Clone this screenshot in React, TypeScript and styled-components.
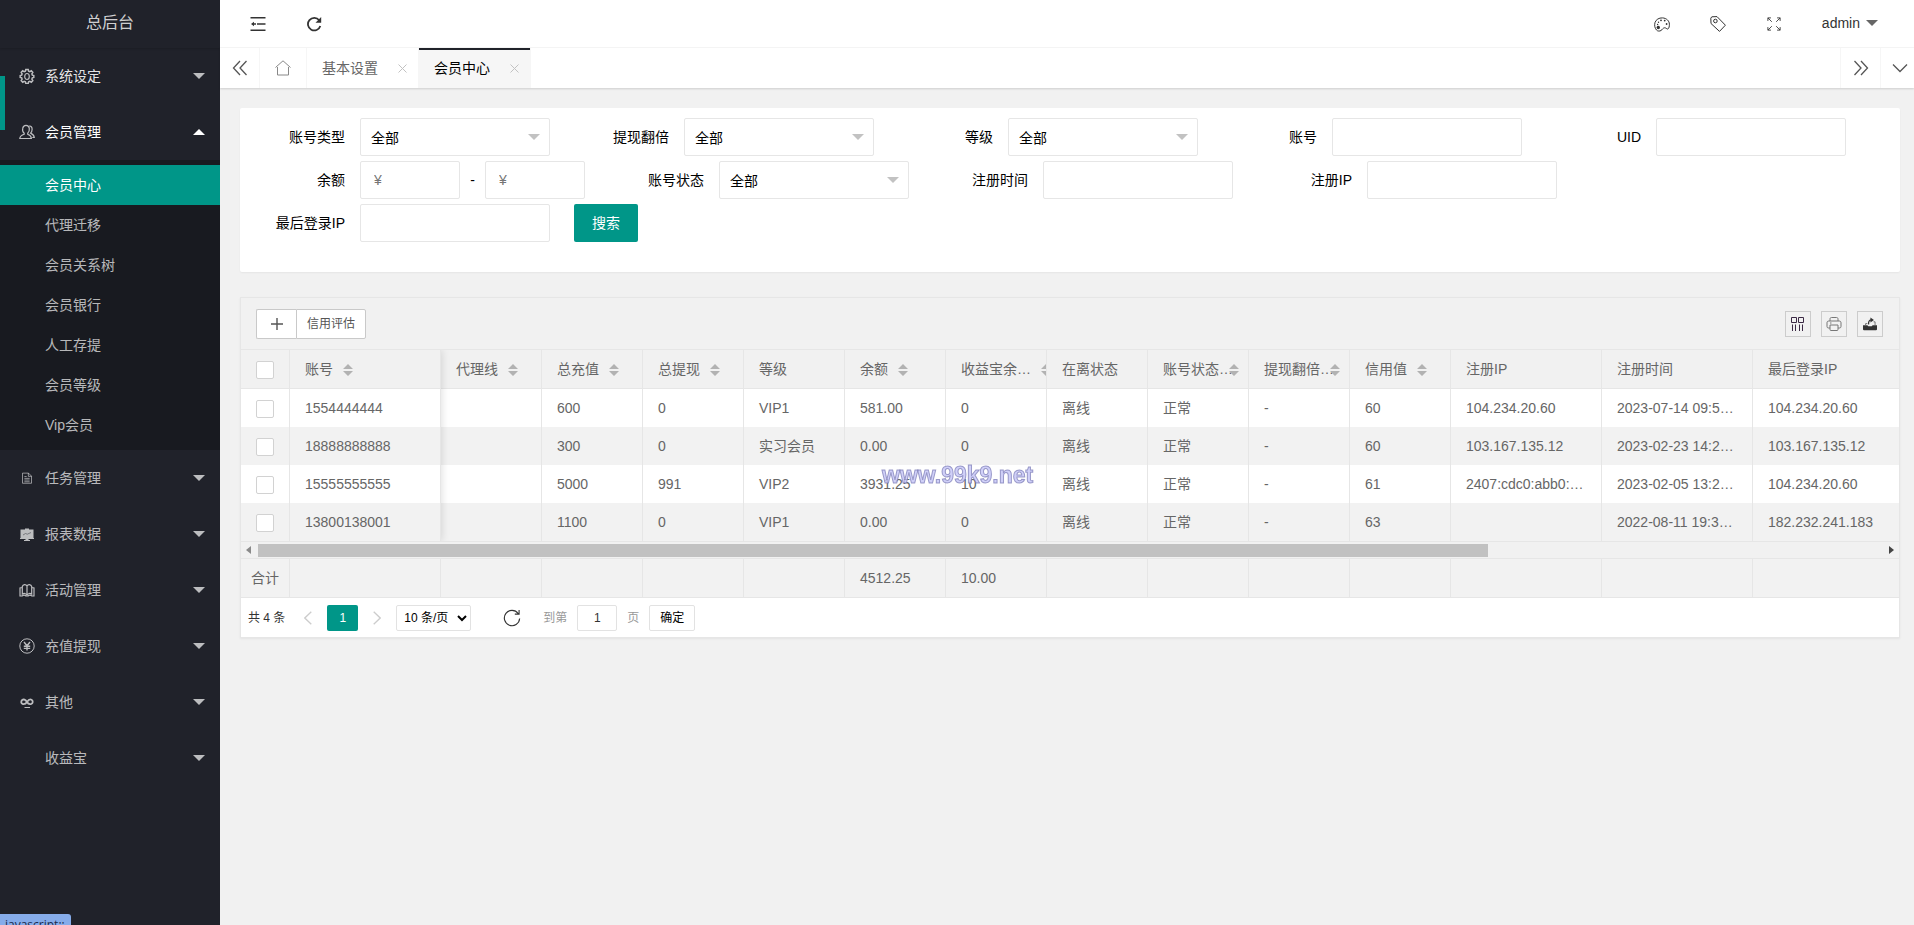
import React from "react";
import styled, { createGlobalStyle, css } from "styled-components";

const GlobalStyle = createGlobalStyle`
  *, *::before, *::after { box-sizing: border-box; }
  body {
    margin: 0;
    background: #f1f1f1;
    color: #333;
    font: 14px/24px "Liberation Sans", "Noto Sans CJK SC", sans-serif;
    overflow: hidden;
  }
  button, input, select { font: inherit; color: inherit; margin: 0; }
  a { color: inherit; text-decoration: none; }
  svg { display: block; flex: none; }
`;

const TEAL = "#009688";
const LINE = "#e6e6e6";

/* ---------- shell ---------- */

const Shell = styled.div`
  display: flex;
  height: 100vh;
  overflow: hidden;
`;

const Main = styled.div`
  flex: 1;
  min-width: 0;
  display: flex;
  flex-direction: column;
`;

/* ---------- sidebar ---------- */

const Sidebar = styled.aside`
  position: relative;
  flex: none;
  width: 220px;
  background: #20222a;
  overflow: hidden;
`;

const Brand = styled.h1`
  margin: 0;
  height: 48px;
  padding-bottom: 2px;
  display: flex;
  align-items: center;
  justify-content: center;
  font-size: 16px;
  font-weight: 400;
  color: rgba(255, 255, 255, 0.8);
  box-shadow: 0 1px 2px rgba(0, 0, 0, 0.15);
`;

const MenuLink = styled.a<{ $bright?: number }>`
  display: flex;
  align-items: center;
  height: 56px;
  padding: 0 15px 0 18px;
  color: ${(p) => (p.$bright === 2 ? "#fff" : p.$bright === 1 ? "rgba(255,255,255,.9)" : "rgba(255,255,255,.7)")};
`;

const MenuIcon = styled.span`
  width: 18px;
  height: 18px;
  margin-right: 9px;
  display: flex;
  align-items: center;
  justify-content: center;
  color: rgba(255, 255, 255, 0.7);
`;

const MenuText = styled.span`
  flex: 1;
`;

const SubMenu = styled.div`
  padding: 5px 0;
  background: #181a20;
`;

const SubLink = styled.a<{ $active?: boolean }>`
  display: flex;
  align-items: center;
  height: 40px;
  padding-left: 45px;
  color: ${(p) => (p.$active ? "#fff" : "rgba(255,255,255,.7)")};
  background: ${(p) => (p.$active ? TEAL : "transparent")};
`;

const HoverBar = styled.span`
  position: absolute;
  left: 0;
  top: 76px;
  width: 5px;
  height: 54px;
  background: ${TEAL};
`;

const StatusBubble = styled.div`
  position: fixed;
  left: 0;
  bottom: -11px;
  width: 71px;
  height: 22px;
  padding-left: 5px;
  font: 12px/22px "Open Sans", sans-serif;
  color: #1b2b4c;
  background: #86acea;
  border-top-right-radius: 3px;
`;

/* ---------- header ---------- */

const Header = styled.header`
  flex: none;
  height: 48px;
  padding: 0 36px 0 10px;
  display: flex;
  align-items: center;
  justify-content: space-between;
  background: #fff;
  border-bottom: 1px solid #f6f6f6;
`;

const HeaderGroup = styled.div`
  display: flex;
  align-items: center;
`;

const HeaderButton = styled.button`
  width: 56px;
  height: 46px;
  padding: 1px 0 0;
  border: 0;
  background: none;
  display: flex;
  align-items: center;
  justify-content: center;
`;

const UserButton = styled.button`
  height: 46px;
  margin-left: 20px;
  padding: 0 0 1px;
  border: 0;
  background: none;
  display: flex;
  align-items: center;
  gap: 6px;
`;

const TabBar = styled.nav`
  position: relative;
  flex: none;
  display: flex;
  height: 40px;
  background: #fff;
  box-shadow: 0 1px 2px rgba(0, 0, 0, 0.15);
`;

const TabControl = styled.button<{ $side?: "left" | "right" | "end" }>`
  width: ${(p) => (p.$side === "end" ? 34 : 40)}px;
  padding: 0 0 0 ${(p) => (p.$side === "end" ? 5 : 0)}px;
  border: 0 solid #f6f6f6;
  border-right-width: ${(p) => (p.$side === "left" ? 1 : 0)}px;
  border-left-width: ${(p) => (p.$side === "left" ? 0 : 1)}px;
  background: none;
  color: #555;
  display: flex;
  align-items: center;
  justify-content: center;
`;

const TabList = styled.div`
  flex: 1;
  display: flex;
`;

const Tab = styled.a<{ $active?: boolean }>`
  display: flex;
  align-items: center;
  padding: 0 11px 0 15px;
  border-right: 1px solid #f6f6f6;
  color: #666;
  gap: 20px;
  ${(p) =>
    p.$active &&
    css`
      color: #000;
      background: #f6f6f6;
      box-shadow: inset 0 2px 0 #20222a;
    `}
`;

const HomeTab = styled.a`
  width: 47px;
  display: flex;
  align-items: center;
  justify-content: center;
  border-right: 1px solid #f6f6f6;
  color: #888;
`;

/* ---------- search card ---------- */

const Content = styled.main`
  flex: 1;
  padding: 20px 14px 20px 20px;
`;

const SearchCard = styled.form`
  display: flex;
  flex-wrap: wrap;
  padding: 10px 10px 25px;
  background: #fff;
  border-radius: 2px;
  box-shadow: 0 1px 2px rgba(0, 0, 0, 0.05);
`;

const Field = styled.div`
  display: flex;
  align-items: center;
  margin: 0 24px 5px 0;
  color: #000;
`;

const Label = styled.label`
  width: 110px;
  padding-right: 15px;
  text-align: right;
`;

const TextInput = styled.input<{ $small?: boolean }>`
  width: ${(p) => (p.$small ? 100 : 190)}px;
  height: 38px;
  padding: 0 ${(p) => (p.$small ? 13 : 10)}px;
  border: 1px solid ${LINE};
  border-radius: 2px;
  background: #fff;
  outline: 0;
  &::placeholder { color: #757575; }
`;

const Dash = styled.span`
  width: 25px;
  text-align: center;
`;

const SelectBox = styled.div`
  display: grid;
  align-items: center;
  width: 190px;
  height: 38px;
  > * { grid-area: 1 / 1; }
  > svg { justify-self: end; margin-right: 10px; pointer-events: none; }
`;

const Select = styled.select`
  appearance: none;
  width: 100%;
  height: 38px;
  padding: 2px 30px 0 10px;
  border: 1px solid ${LINE};
  border-radius: 2px;
  background: #fff;
`;

const SearchButton = styled.button`
  width: 64px;
  height: 38px;
  padding: 0;
  border: 0;
  border-radius: 2px;
  background: ${TEAL};
  color: #fff;
`;

/* ---------- table ---------- */

const TableView = styled.section`
  margin-top: 25px;
  border: 1px solid ${LINE};
  box-shadow: 0 1px 2px rgba(0, 0, 0, 0.06);
  overflow: hidden;
`;

const Toolbar = styled.div`
  display: flex;
  align-items: center;
  justify-content: space-between;
  height: 52px;
  padding: 0 16px 0 15px;
  border-bottom: 1px solid ${LINE};
`;

const ButtonGroup = styled.div`
  display: flex;
`;

const GroupButton = styled.button<{ $first?: boolean }>`
  width: ${(p) => (p.$first ? 40 : 70)}px;
  height: 30px;
  padding: 0;
  border: 1px solid #c9c9c9;
  border-right-width: ${(p) => (p.$first ? 0 : 1)}px;
  border-radius: ${(p) => (p.$first ? "2px 0 0 2px" : "0 2px 2px 0")};
  background: #fff;
  color: #555;
  font-size: 12px;
  display: flex;
  align-items: center;
  justify-content: center;
`;

const ToolGroup = styled.div`
  display: flex;
  gap: 10px;
`;

const ToolButton = styled.button`
  width: 26px;
  height: 26px;
  padding: 0;
  border: 1px solid #ccc;
  background: none;
  display: flex;
  align-items: center;
  justify-content: center;
`;

const Table = styled.table`
  width: 1663px;
  table-layout: fixed;
  border-collapse: separate;
  border-spacing: 0;
  color: #666;
`;

const rowShade = "#f2f2f2";

const Cell = styled.td`
  height: 38px;
  padding: 0 15px;
  border-right: 1px solid ${LINE};
  overflow: hidden;
  white-space: nowrap;
  text-overflow: ellipsis;
  text-align: left;
  font-weight: 400;
  line-height: 28px;
`;

const HeadCell = styled(Cell).attrs({ as: "th" })`
  height: 39px;
  padding-right: 0;
  border-bottom: 1px solid ${LINE};
`;

const Row = styled.tr<{ $even?: boolean }>`
  background: ${(p) => (p.$even ? rowShade : "#fff")};
`;

const BodyFrame = styled.div`
  position: relative;
  overflow: hidden;
  border-bottom: 1px solid ${LINE};
`;

const FixedShadow = styled.div`
  position: absolute;
  top: 0;
  bottom: 0;
  left: 0;
  width: 200px;
  box-shadow: 1px 0 8px rgba(0, 0, 0, 0.12);
  pointer-events: none;
`;

const CheckBox = styled.input`
  appearance: none;
  display: block;
  width: 18px;
  height: 18px;
  margin: 2px 0 0;
  border: 1px solid #d2d2d2;
  border-radius: 2px;
  background: #fff;
`;

const HeadInner = styled.span`
  display: flex;
  align-items: center;
`;

const SortMark = styled.svg<{ $tight?: boolean }>`
  margin: 2px 0 0 ${(p) => (p.$tight ? 0 : 10)}px;
`;

const Dots = styled.span`
  width: 10px;
`;

const ScrollTrack = styled.div`
  display: flex;
  align-items: center;
  height: 17px;
  padding: 0 5px;
  background: #f1f1f1;
  border-bottom: 1px solid ${LINE};
`;

const ScrollArea = styled.div`
  flex: 1;
  margin: 1px 12px 0 7px;
`;

const ScrollThumb = styled.div`
  width: 76%;
  height: 13px;
  background: #c1c1c1;
`;

const TotalFrame = styled.div`
  background: ${rowShade};
  overflow: hidden;
  border-bottom: 1px solid ${LINE};
`;

const TotalLabel = styled(Cell)`
  padding: 0 0 0 10px;
`;

const Pager = styled.div`
  display: flex;
  align-items: center;
  height: 39px;
  padding: 0 7px;
  background: #fff;
  font-size: 12px;
`;

const PageStep = styled.button<{ $next?: boolean }>`
  width: ${(p) => (p.$next ? 38 : 42)}px;
  height: 26px;
  padding: 0 0 0 ${(p) => (p.$next ? 0 : 4)}px;
  border: 0;
  background: none;
  color: #ccc;
  display: flex;
  align-items: center;
  justify-content: center;
`;

const PageNumber = styled.button`
  width: 31px;
  height: 26px;
  padding: 0;
  border: 0;
  border-radius: 2px;
  background: ${TEAL};
  color: #fff;
`;

const PageSize = styled.select`
  width: 75px;
  height: 26px;
  padding: 0 0 0 3px;
  border: 1px solid #e2e2e2;
  border-radius: 2px;
  background: #fff;
  color: #000;
`;

const RefreshButton = styled.button`
  margin: 0 22px 0 32px;
  padding: 0;
  border: 0;
  background: none;
`;

const SkipText = styled.label`
  color: #999;
`;

const SkipInput = styled.input`
  width: 40px;
  height: 26px;
  margin: 0 10px;
  padding: 0;
  border: 1px solid #e2e2e2;
  border-radius: 2px;
  text-align: center;
`;

const SkipButton = styled.button`
  width: 46px;
  height: 26px;
  margin-left: 10px;
  padding: 0;
  border: 1px solid #e2e2e2;
  border-radius: 2px;
  background: #fff;
  color: #000;
`;

const Watermark = styled.div`
  position: fixed;
  left: 882px;
  top: 463px;
  font: bold 23px/24px "Liberation Sans", sans-serif;
  color: rgba(196, 196, 246, 0.8);
  -webkit-text-stroke: 1px rgba(120, 120, 180, 0.7);
  pointer-events: none;
`;

/* ---------- icons ---------- */

type IconProps = { size?: number; children: React.ReactNode; sw?: number };
const Icon = ({ size = 16, sw = 1, children }: IconProps) => (
  <svg width={size} height={size} viewBox="0 0 16 16" fill="none" stroke="currentColor" strokeWidth={sw} aria-hidden="true">
    {children}
  </svg>
);

const Caret = ({ up, color = "currentColor" }: { up?: boolean; color?: string }) => (
  <svg width="12" height="6" viewBox="0 0 12 6" fill={color} aria-hidden="true">
    <path d={up ? "M0 6L6 0L12 6Z" : "M0 0H12L6 6Z"} />
  </svg>
);

const GearIcon = () => (
  <Icon sw={1.5}>
    <path d="M6.800 1.500h2.400l.4 1.700 1.200.5 1.500-.9 1.500 1.600-.9 1.500.4 1.200 1.500.4v2l-1.500.4-.4 1.200.9 1.600-1.500 1.500-1.500-.9-1.200.5-.4 1.700H6.800l-.4-1.700-1.200-.5-1.500.9-1.500-1.500.9-1.600-.4-1.200-1.500-.4v-2l1.500-.4.4-1.200-.9-1.500 1.500-1.600 1.500.9 1.200-.5z" />
    <ellipse cx="8" cy="8.500" rx="2.300" ry="3" strokeWidth="1.200" />
  </Icon>
);

const UserIcon = () => (
  <Icon sw={1.2}>
    <path d="M5.200 9.300C3.600 8 3.400 5.800 3.700 4.400 4 2.300 5.300 1.300 7 1.300s3.100 1 3.300 3.100c.2 1.500-.1 3.600-1.600 4.900v1c2.200.7 3.500 1.500 3.700 4.200H.8c.2-2.700 2.200-3.500 4.400-4.200z" />
    <path d="M10.300 1.800c1.900.2 2.900 1.800 2.800 3.700 0 1.500-.6 2.600-1.500 3.600 2.300 1 3.400 2 3.700 4.400h-2" />
  </Icon>
);

const FileIcon = () => (
  <Icon size={12} sw={1.200}>
    <g opacity=".8">
      <path d="M2 1.500h8l4 4V15H2zM9.800 1.500v4.300H14M4.500 6h3M4.500 8.500h7M4.500 10.700h7M4.500 13h7" />
    </g>
  </Icon>
);

const BoardIcon = () => (
  <Icon>
    <path fill="currentColor" stroke="none" d="M6 2.500h4v1h4.500v8.500H15v1H9.500v1H11v1H5v-1h1.500v-1H1v-1h.5V3.500H6z" />
    <path stroke="#5a5c62" strokeWidth=".7" d="M4 9l2.500-1.500 1.800.7L12 6.500" />
  </Icon>
);

const BookIcon = () => (
  <Icon sw={1.2}>
    <path d="M8 4v9M8 4C7 2 4 2 3.300 4.500V12C5 10.800 7 11.500 8 13c1-1.500 3-2.200 4.700-1V4.500C12 2 9 2 8 4M3 5.500L1 6v8h2.200M13 5.500l2 .5v8h-2.200M3 14c1.500-1.300 3-1 4 0h2c1-1 2.500-1.300 4 0" />
  </Icon>
);

const YenIcon = () => (
  <Icon sw={1}>
    <circle cx="8" cy="8" r="7.200" />
    <path strokeWidth="1.400" d="M5 4l3 3.800L11 4M8 7.800V12.500M4.800 8.200h6.400M4.800 10.400h6.400" />
  </Icon>
);

const InfinityIcon = () => (
  <Icon sw={1.800}>
    <path d="M8 8C6.500 5.500 4.500 5 3.200 6c-1.600 1.400-1.100 3.500.5 4C5.800 10.500 7 9.500 8 8s2.700-3.200 4.500-2.300c1.800 1.100 1.500 3.500-.2 4.200C10.500 10.400 9 9.800 8 8" />
    <path strokeWidth="1" d="M5.500 13.500h5.500" />
  </Icon>
);

const MenuFoldIcon = () => (
  <Icon sw={1.5}>
    <path d="M.5 1.700h15M7 8h8.500M.5 14.300h15" />
    <path fill="currentColor" stroke="none" d="M1 8l3-2.200v4.400zM4 7.300h2v1.400H4z" />
  </Icon>
);

const ReloadIcon = () => (
  <Icon sw={1.800}>
    <path d="M13.200 4.200A6.300 6.300 0 1 0 14.300 10" />
    <path fill="currentColor" stroke="none" d="M15.200 1v5.700H9.500z" />
  </Icon>
);

const PaletteIcon = () => (
  <Icon>
    <path d="M2.500 14C.8 12 .2 9.500 1 6.500 2 3.500 5 1.700 8.500 1.900c4 .2 6.800 3 6.900 6.300 0 2-.3 4.300-1.600 4.800-1 .3-2-1.500-3.400-1.200-1.800.4-1.900 1.700-3.400 2.700-1.200.8-3.300.9-4.500-.5z" />
    <circle cx="4.500" cy="6.300" r=".7" fill="currentColor" stroke="none" />
    <circle cx="7" cy="4.300" r=".9" fill="currentColor" stroke="none" />
    <circle cx="10.700" cy="4.600" r=".9" fill="currentColor" stroke="none" />
    <circle cx="12.600" cy="8" r=".9" fill="currentColor" stroke="none" />
    <circle cx="4.300" cy="11.500" r="1.700" fill="currentColor" stroke="none" />
    <circle cx="3.600" cy="8.500" r=".7" fill="currentColor" stroke="none" />
  </Icon>
);

const TagIcon = () => (
  <Icon>
    <path d="M.8 2.200L1.800.8 7 .6 15.400 9.200 9.500 15.400 1 7.500z" strokeLinejoin="round" />
    <circle cx="5.400" cy="5" r="1.800" />
  </Icon>
);

const ExpandIcon = () => (
  <Icon size={14}>
    <path d="M1 4.500V1h3.500M1 1l4.500 4.500M11.500 1H15v3.500M15 1l-4.500 4.500M1 11.500V15h3.500M1 15l4.500-4.500M15 11.500V15h-3.500M15 15l-4.500-4.500" />
  </Icon>
);

const DoubleLeft = () => (
  <Icon sw={1.300}>
    <path d="M8 1L1.500 8 8 15M14.500 1L8 8l6.500 7" />
  </Icon>
);
const DoubleRight = () => (
  <Icon sw={1.300}>
    <path d="M8 1l6.500 7L8 15M1.500 1L8 8l-6.500 7" />
  </Icon>
);
const DownIcon = () => (
  <Icon sw={1.300}>
    <path d="M1 4.500l7 7 7-7" />
  </Icon>
);
const HomeIcon = () => (
  <Icon sw={1}>
    <path d="M.5 7.500L8 .8l7.500 6.700M2.500 7v8h11V7" />
  </Icon>
);
const CloseIcon = () => (
  <svg width="9" height="9" viewBox="0 0 9 9" stroke="#c2c2c2" aria-hidden="true">
    <path d="M.5.5l8 8M8.500.5l-8 8" />
  </svg>
);
const PlusIcon = () => (
  <svg width="12" height="12" viewBox="0 0 12 12" stroke="currentColor" strokeWidth="1.400" aria-hidden="true">
    <path d="M6 0v12M0 6h12" />
  </svg>
);
const ColumnsIcon = () => (
  <svg width="14" height="14" viewBox="0 0 14 14" fill="none" stroke="#3c2a45" aria-hidden="true">
    <path d="M.5.5h5v5h-5zM7.500.5h5v5h-5zM1.500 7.500V14M4.500 7.500V14M8.500 7.500V14M11.500 7.500V14" />
  </svg>
);
const PrintIcon = () => (
  <Icon>
    <g stroke="#777">
      <path d="M4 5V3.200C4 2 4.500 1.500 5.500 1.500h5c1 0 1.500.5 1.500 1.700V5M4 12H2.800C1.500 12 1 11.500 1 10.300V7C1 5.700 1.500 5 2.800 5h10.400C14.500 5 15 5.700 15 7v3.300c0 1.200-.5 1.700-1.800 1.700H12" />
      <path d="M4 9h8v4.500c0 .7-.3 1-1 1H5c-.7 0-1-.3-1-1zM4 7h1.500" />
    </g>
  </Icon>
);
const ExportIcon = () => (
  <Icon size={14}>
    <path fill="#333" stroke="none" d="M0 9.500h5l1 1.200h4l1-1.200h5V14c0 .8-.4 1.200-1.200 1.200H1.200C.4 15.200 0 14.800 0 14z" />
    <path stroke="#666" strokeWidth="1" d="M3 9.500V7.500h2M13.800 9.500V5.500H12" />
    <path stroke="#333" strokeWidth="1.400" d="M6.500 8.500C6 5.500 7 3.500 9.500 3.200" />
    <path fill="#333" stroke="none" d="M8.500 .5l4 3-4 2.700z" />
  </Icon>
);
const CircleArrowIcon = () => (
  <Icon size={18} sw={1}>
    <path d="M13.500 4A6.800 6.800 0 1 0 14.800 8.500M14.300.8v3.700h-3.800" />
  </Icon>
);
const Chevron = ({ right }: { right?: boolean }) => (
  <svg width="8" height="14" viewBox="0 0 8 14" fill="none" stroke="currentColor" strokeWidth="1.300" aria-hidden="true">
    <path d={right ? "M.7.7L7.200 7 .7 13.300" : "M7.300.7L.8 7l6.500 6.300"} />
  </svg>
);

/* ---------- data ---------- */

const subItems = ["会员中心", "代理迁移", "会员关系树", "会员银行", "人工存提", "会员等级", "Vip会员"];

const lowerMenu: [string, React.ReactNode][] = [
  ["任务管理", <FileIcon />],
  ["报表数据", <BoardIcon />],
  ["活动管理", <BookIcon />],
  ["充值提现", <YenIcon />],
  ["其他", <InfinityIcon />],
  ["收益宝", null],
];

type Column = { title: string; width: number; sort?: boolean; dots?: boolean };
const columns: Column[] = [
  { title: "账号", width: 151, sort: true },
  { title: "代理线", width: 101, sort: true },
  { title: "总充值", width: 101, sort: true },
  { title: "总提现", width: 101, sort: true },
  { title: "等级", width: 101 },
  { title: "余额", width: 101, sort: true },
  { title: "收益宝余…", width: 101, sort: true },
  { title: "在离状态", width: 101 },
  { title: "账号状态", width: 101, sort: true, dots: true },
  { title: "提现翻倍", width: 101, sort: true, dots: true },
  { title: "信用值", width: 101, sort: true },
  { title: "注册IP", width: 151 },
  { title: "注册时间", width: 151 },
  { title: "最后登录IP", width: 151 },
];

const rows = [
  ["1554444444", "", "600", "0", "VIP1", "581.00", "0", "离线", "正常", "-", "60", "104.234.20.60", "2023-07-14 09:53:21", "104.234.20.60"],
  ["18888888888", "", "300", "0", "实习会员", "0.00", "0", "离线", "正常", "-", "60", "103.167.135.12", "2023-02-23 14:21:08", "103.167.135.12"],
  ["15555555555", "", "5000", "991", "VIP2", "3931.25", "10", "离线", "正常", "-", "61", "2407:cdc0:abb0:1f2::1", "2023-02-05 13:27:40", "104.234.20.60"],
  ["13800138001", "", "1100", "0", "VIP1", "0.00", "0", "离线", "正常", "-", "63", "", "2022-08-11 19:30:15", "182.232.241.183"],
];

const totals = ["", "", "", "", "", "4512.25", "10.00", "", "", "", "", "", "", ""];

const Columns = () => (
  <colgroup>
    <col width={49} />
    {columns.map((c) => (
      <col key={c.title} width={c.width} />
    ))}
  </colgroup>
);

const Sort = ({ tight }: { tight?: boolean }) => (
  <SortMark $tight={tight} width="10" height="12" viewBox="0 0 10 12" fill="#b2b2b2" aria-hidden="true">
    <path d="M0 5L5 0l5 5zM0 7h10l-5 5z" />
  </SortMark>
);

const SelectField = ({ id, label }: { id: string; label: string }) => (
  <Field>
    <Label htmlFor={id}>{label}</Label>
    <SelectBox>
      <Select id={id}>
        <option>全部</option>
      </Select>
      <Caret color="#c2c2c2" />
    </SelectBox>
  </Field>
);

const TextField = ({ id, label }: { id: string; label: string }) => (
  <Field>
    <Label htmlFor={id}>{label}</Label>
    <TextInput id={id} type="text" />
  </Field>
);

export default function App() {
  return (
    <>
      <GlobalStyle />
      <Shell>
        <Sidebar>
          <Brand>总后台</Brand>
          <MenuLink href="#" $bright={1}>
            <MenuIcon><GearIcon /></MenuIcon>
            <MenuText>系统设定</MenuText>
            <Caret color="rgba(255,255,255,.7)" />
          </MenuLink>
          <MenuLink href="#" $bright={2}>
            <MenuIcon><UserIcon /></MenuIcon>
            <MenuText>会员管理</MenuText>
            <Caret up />
          </MenuLink>
          <SubMenu>
            {subItems.map((t, i) => (
              <SubLink key={t} href="#" $active={i === 0}>{t}</SubLink>
            ))}
          </SubMenu>
          {lowerMenu.map(([t, icon]) => (
            <MenuLink key={t} href="#">
              <MenuIcon>{icon}</MenuIcon>
              <MenuText>{t}</MenuText>
              <Caret />
            </MenuLink>
          ))}
          <HoverBar />
        </Sidebar>

        <Main>
          <Header>
            <HeaderGroup>
              <HeaderButton aria-label="侧边伸缩"><MenuFoldIcon /></HeaderButton>
              <HeaderButton aria-label="刷新"><ReloadIcon /></HeaderButton>
            </HeaderGroup>
            <HeaderGroup>
              <HeaderButton aria-label="主题"><PaletteIcon /></HeaderButton>
              <HeaderButton aria-label="便签"><TagIcon /></HeaderButton>
              <HeaderButton aria-label="全屏"><ExpandIcon /></HeaderButton>
              <UserButton>admin<Caret color="#666" /></UserButton>
            </HeaderGroup>
          </Header>
          <TabBar>
            <TabControl $side="left" aria-label="向左"><DoubleLeft /></TabControl>
            <TabList>
              <HomeTab href="#" aria-label="主页"><HomeIcon /></HomeTab>
              <Tab href="#">基本设置<CloseIcon /></Tab>
              <Tab href="#" $active>会员中心<CloseIcon /></Tab>
            </TabList>
            <TabControl $side="right" aria-label="向右"><DoubleRight /></TabControl>
            <TabControl $side="end" aria-label="更多"><DownIcon /></TabControl>
          </TabBar>

          <Content>
            <SearchCard onSubmit={(e) => e.preventDefault()}>
              <SelectField id="type" label="账号类型" />
              <SelectField id="times" label="提现翻倍" />
              <SelectField id="level" label="等级" />
              <TextField id="account" label="账号" />
              <TextField id="uid" label="UID" />
              <Field>
                <Label htmlFor="min">余额</Label>
                <TextInput id="min" $small placeholder="¥" />
                <Dash>-</Dash>
                <TextInput id="max" $small placeholder="¥" aria-label="最高余额" />
              </Field>
              <SelectField id="state" label="账号状态" />
              <TextField id="regtime" label="注册时间" />
              <TextField id="regip" label="注册IP" />
              <TextField id="lastip" label="最后登录IP" />
              <SearchButton>搜索</SearchButton>
            </SearchCard>

            <TableView>
              <Toolbar>
                <ButtonGroup>
                  <GroupButton $first aria-label="添加"><PlusIcon /></GroupButton>
                  <GroupButton>信用评估</GroupButton>
                </ButtonGroup>
                <ToolGroup>
                  <ToolButton aria-label="筛选列"><ColumnsIcon /></ToolButton>
                  <ToolButton aria-label="打印"><PrintIcon /></ToolButton>
                  <ToolButton aria-label="导出"><ExportIcon /></ToolButton>
                </ToolGroup>
              </Toolbar>
              <BodyFrame>
                <Table>
                  <Columns />
                  <thead>
                    <tr>
                      <HeadCell><CheckBox type="checkbox" aria-label="全选" /></HeadCell>
                      {columns.map((c) => (
                        <HeadCell key={c.title}>
                          <HeadInner>
                            {c.title}
                            {c.dots && <Dots>…</Dots>}
                            {c.sort && <Sort tight={c.dots} />}
                          </HeadInner>
                        </HeadCell>
                      ))}
                    </tr>
                  </thead>
                  <tbody>
                    {rows.map((r, i) => (
                      <Row key={r[0]} $even={i % 2 === 1}>
                        <Cell><CheckBox type="checkbox" aria-label={r[0]} /></Cell>
                        {r.map((v, j) => (
                          <Cell key={j}>{v}</Cell>
                        ))}
                      </Row>
                    ))}
                  </tbody>
                </Table>
                <FixedShadow />
              </BodyFrame>
              <ScrollTrack>
                <svg width="5" height="8" viewBox="0 0 5 8" fill="#8a8a8a"><path d="M5 0v8L0 4z" /></svg>
                <ScrollArea><ScrollThumb /></ScrollArea>
                <svg width="5" height="8" viewBox="0 0 5 8" fill="#444"><path d="M0 0v8l5-4z" /></svg>
              </ScrollTrack>
              <TotalFrame>
                <Table>
                  <Columns />
                  <tbody>
                    <tr>
                      <TotalLabel>合计</TotalLabel>
                      {totals.map((v, j) => (
                        <Cell key={j}>{v}</Cell>
                      ))}
                    </tr>
                  </tbody>
                </Table>
              </TotalFrame>
              <Pager>
                <span>共 4 条</span>
                <PageStep aria-label="上一页"><Chevron /></PageStep>
                <PageNumber>1</PageNumber>
                <PageStep $next aria-label="下一页"><Chevron right /></PageStep>
                <PageSize aria-label="每页条数">
                  <option>10 条/页</option>
                </PageSize>
                <RefreshButton aria-label="刷新表格"><CircleArrowIcon /></RefreshButton>
                <SkipText htmlFor="skip">到第</SkipText>
                <SkipInput id="skip" defaultValue="1" />
                <SkipText htmlFor="skip">页</SkipText>
                <SkipButton>确定</SkipButton>
              </Pager>
            </TableView>
          </Content>
        </Main>
      </Shell>
      <Watermark>www.99k9.net</Watermark>
      <StatusBubble>javascript:;</StatusBubble>
    </>
  );
}
